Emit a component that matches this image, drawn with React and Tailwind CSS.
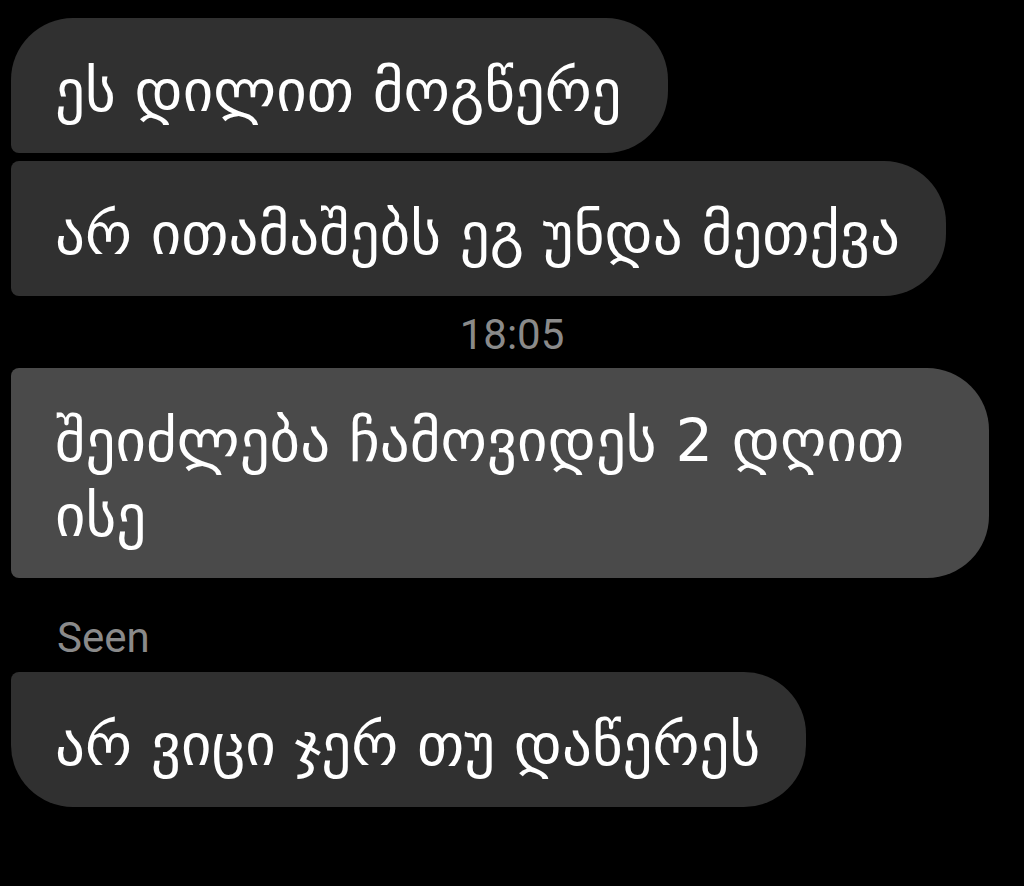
const Bubble = ({ children, className = "" }) => (
  <div
    className={`pl-[44px] pr-[46px] pt-[35px] pb-[25px] text-[59px] leading-[75px] text-white ${className}`}
  >
    {children}
  </div>
);

export default function App() {
  return (
    <div className="min-h-[886px] w-full bg-black pl-[11px] pt-[18px] font-['DejaVu_Sans',sans-serif]">
      <div className="flex flex-col">
        <Bubble className="w-fit bg-[#303030] rounded-tl-[62px] rounded-r-[62px] rounded-bl-[8px]">
          ეს დილით მოგწერე
        </Bubble>
        <Bubble className="w-fit mt-[8px] bg-[#303030] rounded-l-[8px] rounded-r-[62px]">
          არ ითამაშებს ეგ უნდა მეთქვა
        </Bubble>
        <div className="h-[72px] flex items-center justify-center pt-[5px] pr-[11px] font-['Roboto',sans-serif] text-[42px] text-[#8a8a8a]">
          18:05
        </div>
        <Bubble className="w-[978px] bg-[#4a4a4a] rounded-l-[8px] rounded-r-[62px]">
          შეიძლება ჩამოვიდეს 2 დღით ისე
        </Bubble>
        <div className="h-[94px] flex items-center pt-[24px] pl-[46px] font-['Roboto',sans-serif] text-[42px] text-[#8a8a8a]">
          Seen
        </div>
        <Bubble className="w-fit bg-[#303030] rounded-tl-[8px] rounded-bl-[62px] rounded-r-[62px]">
          არ ვიცი ჯერ თუ დაწერეს
        </Bubble>
      </div>
    </div>
  );
}
